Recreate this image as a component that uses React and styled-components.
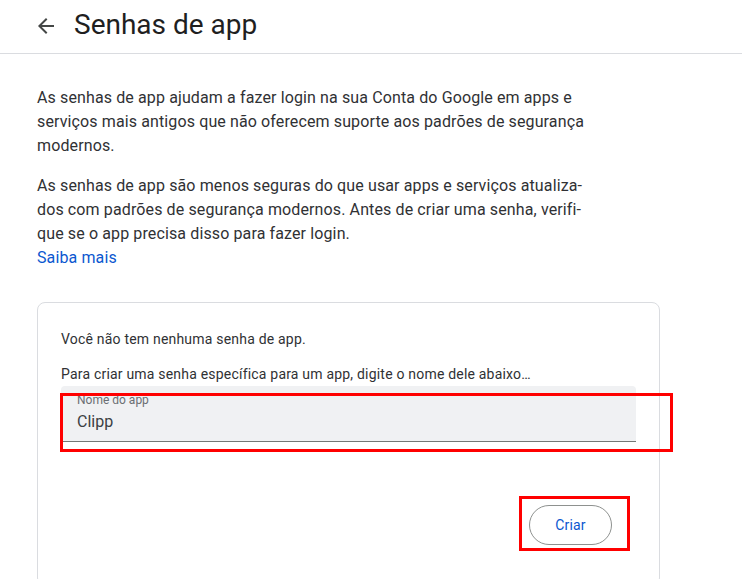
import React, { useState } from "react";
import styled, { createGlobalStyle } from "styled-components";

const GlobalStyle = createGlobalStyle`
  html, body {
    margin: 0;
    padding: 0;
    background: #ffffff;
    overflow: hidden;
  }
  body {
    font-family: Roboto, "Liberation Sans", Arial, sans-serif;
    color: #1f1f1f;
  }
`;

const ArrowBack = () => (
  <svg width="24" height="24" viewBox="0 0 24 24" fill="#444746">
    <path d="M20 11H7.83l5.59-5.59L12 4l-8 8 8 8 1.41-1.41L7.83 13H20v-2z" />
  </svg>
);

const App = () => {
  const [appName, setAppName] = useState("Clipp");

  return (
    <Page>
      <GlobalStyle />
      <Header>
        <BackButton aria-label="Voltar">
          <ArrowBack />
        </BackButton>
        <Title>Senhas de app</Title>
      </Header>

      <Content>
        <Paragraph>
          As senhas de app ajudam a fazer login na sua Conta do Google em apps e
          <br />
          serviços mais antigos que não oferecem suporte aos padrões de segurança
          <br />
          modernos.
        </Paragraph>
        <Paragraph>
          As senhas de app são menos seguras do que usar apps e serviços atualiza-
          <br />
          dos com padrões de segurança modernos. Antes de criar uma senha, verifi-
          <br />
          que se o app precisa disso para fazer login.
          <br />
          <Link href="#">Saiba mais</Link>
        </Paragraph>

        <Card>
          <CardText>Você não tem nenhuma senha de app.</CardText>
          <CardText $gap={15}>
            Para criar uma senha específica para um app, digite o nome dele abaixo…
          </CardText>
          <Field>
            <FieldLabel>Nome do app</FieldLabel>
            <FieldInput
              value={appName}
              onChange={(e) => setAppName(e.target.value)}
            />
          </Field>
          <Actions>
            <CreateButton>Criar</CreateButton>
          </Actions>

          <Highlight $left={22} $top={90} $width={613} $height={59} />
          <Highlight $left={481} $top={193} $width={111} $height={55} />
        </Card>
      </Content>
    </Page>
  );
};

export default App;

const Page = styled.div`
  width: 742px;
  height: 579px;
  overflow: hidden;
`;

const Header = styled.header`
  display: flex;
  align-items: center;
  height: 53px;
  padding-left: 34px;
  border-bottom: 1px solid #dadce0;
  box-sizing: content-box;
`;

const BackButton = styled.button`
  display: flex;
  align-items: center;
  justify-content: center;
  width: 24px;
  height: 24px;
  padding: 0;
  margin-top: -2px;
  border: none;
  background: none;
  cursor: pointer;
`;

const Title = styled.h1`
  margin: -3px 0 0 16px;
  font-family: Roboto, "Liberation Sans", Arial, sans-serif;
  font-size: 28px;
  font-weight: 400;
  line-height: 36px;
  color: #1f1f1f;
`;

const Content = styled.main`
  padding: 32px 0 0 37px;
`;

const Paragraph = styled.p`
  margin: 0 0 16px;
  font-size: 16px;
  line-height: 24px;
  color: #303134;
  letter-spacing: 0.12px;
`;

const Link = styled.a`
  color: #0b57d0;
  text-decoration: none;
`;

const Card = styled.section`
  position: relative;
  width: 623px;
  box-sizing: border-box;
  margin-top: 32px;
  padding: 26px 23px 40px 23px;
  border: 1px solid #dadce0;
  border-radius: 8px;
`;

const CardText = styled.p`
  margin: ${({ $gap }) => ($gap ? `${$gap}px` : "0")} 0 0;
  font-size: 14px;
  line-height: 20px;
  letter-spacing: 0.2px;
  color: #303134;
`;

const Field = styled.label`
  display: flex;
  flex-direction: column;
  margin-top: 2px;
  height: 56px;
  box-sizing: border-box;
  padding: 6px 16px 0;
  background: #f0f1f3;
  border-radius: 4px 4px 0 0;
  border-bottom: 1px solid #747775;
`;

const FieldLabel = styled.span`
  font-size: 12px;
  line-height: 16px;
  color: #6b6e72;
`;

const FieldInput = styled.input`
  margin-top: 2px;
  padding: 0;
  border: none;
  outline: none;
  background: transparent;
  font-family: Roboto, "Liberation Sans", Arial, sans-serif;
  font-size: 16px;
  line-height: 24px;
  color: #3c4043;
`;

const Actions = styled.div`
  display: flex;
  justify-content: flex-end;
  margin-top: 63px;
  padding-right: 24px;
`;

const CreateButton = styled.button`
  width: 83px;
  height: 40px;
  border: 1px solid #8e918f;
  border-radius: 20px;
  background: #ffffff;
  color: #0b57d0;
  font-family: Roboto, "Liberation Sans", Arial, sans-serif;
  font-size: 14px;
  font-weight: 400;
  letter-spacing: 0.2px;
  cursor: pointer;
`;

const Highlight = styled.div`
  position: absolute;
  left: ${({ $left }) => $left}px;
  top: ${({ $top }) => $top}px;
  width: ${({ $width }) => $width}px;
  height: ${({ $height }) => $height}px;
  box-sizing: border-box;
  border: 3px solid #ff0000;
  pointer-events: none;
`;
